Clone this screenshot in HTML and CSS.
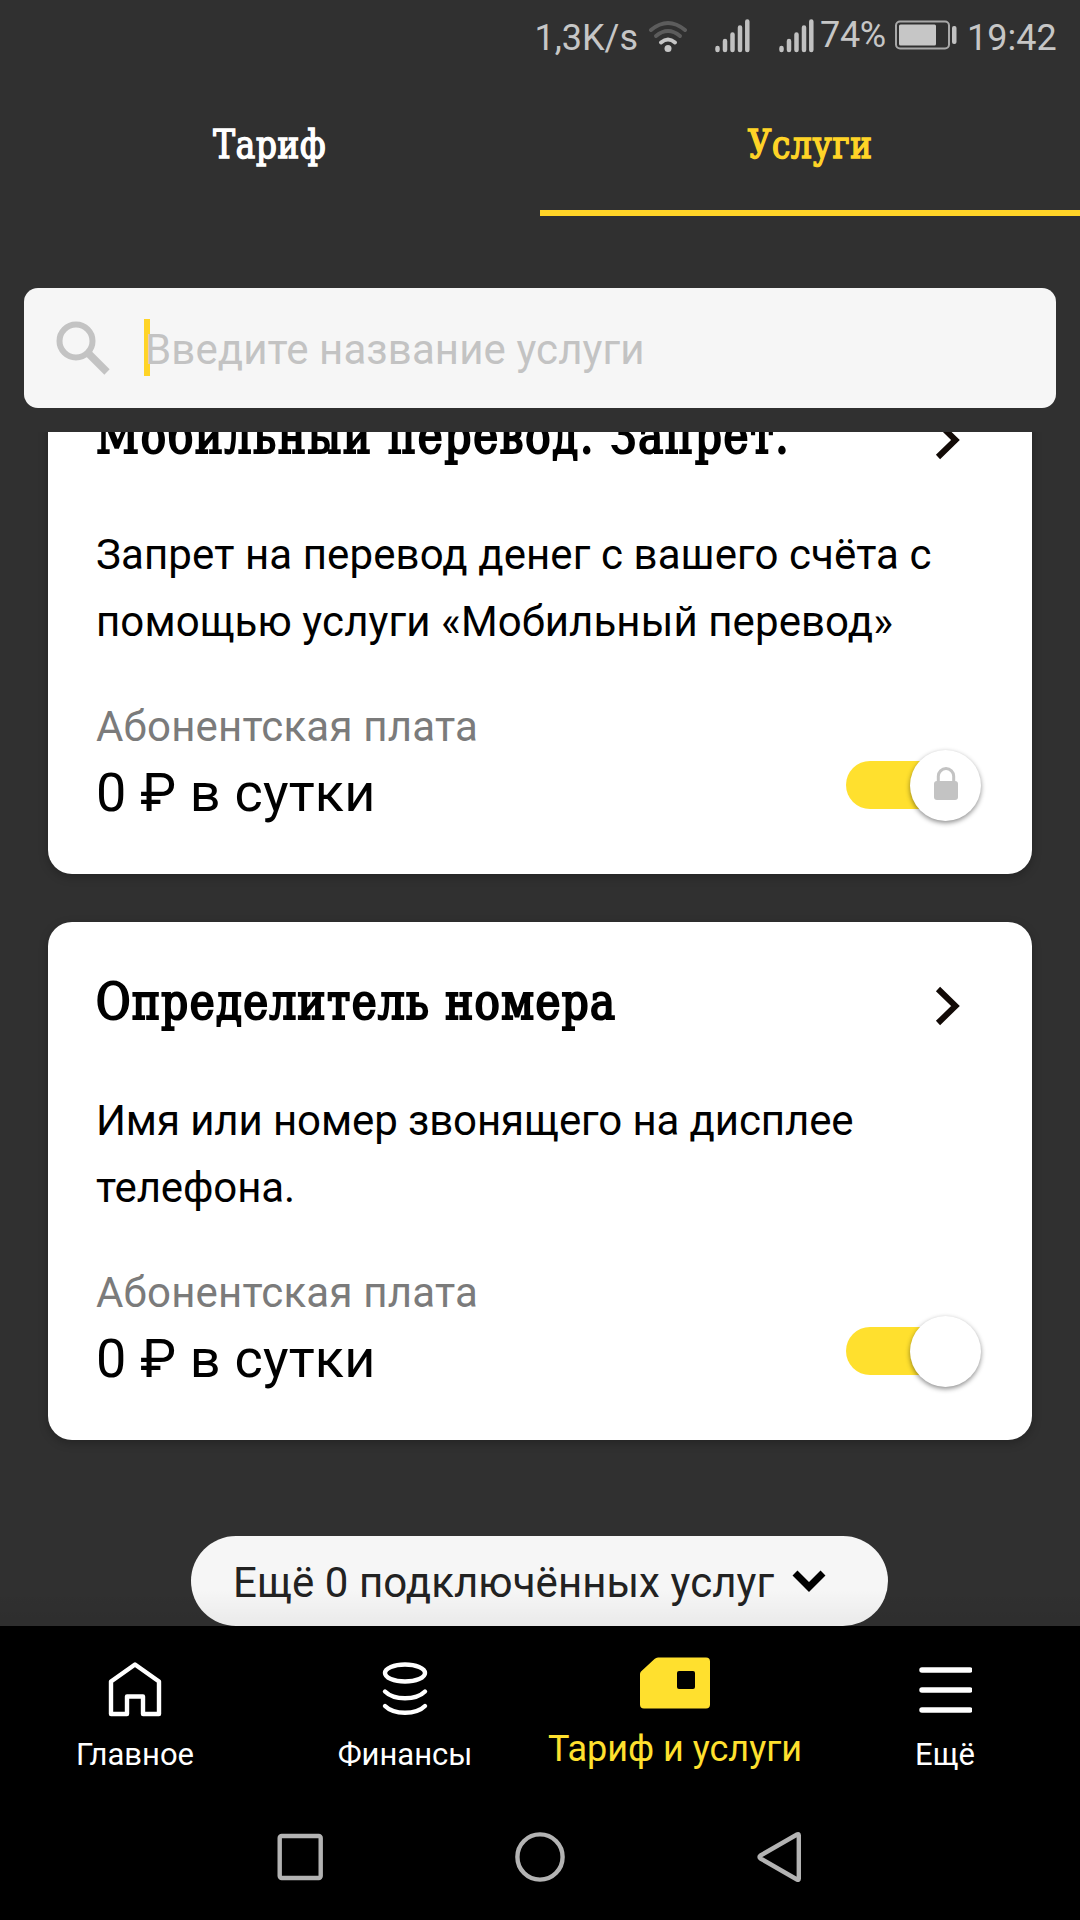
FILE: index.html
```html
<!DOCTYPE html>
<html lang="ru">
<head>
    <meta charset="UTF-8">
    <meta name="viewport" content="width=device-width, initial-scale=1.0">
    <title>Тариф и услуги</title>
    <link rel="stylesheet" href="styles.css">
</head>
<body>
    <div class="app">
        <div class="status-bar">
            <span class="speed">1,3K/s</span>
            <svg class="wifi" width="40" height="34" viewBox="0 0 40 34" fill="none" stroke-width="4" stroke-linecap="round">
                <path d="M3 11Q20 -3 37 11" stroke="#5c5c5c"/>
                <path d="M8 17Q20 7 32 17" stroke="#5c5c5c"/>
                <path d="M13 23.5Q20 17.500 27 23.500" stroke="#c6c6c6"/>
                <circle cx="20" cy="29.500" r="3.500" fill="#c6c6c6"/>
            </svg>
            <svg class="signal" width="35" height="34" viewBox="0 0 35 34" stroke="#c1c1c1" stroke-width="4.500" stroke-linecap="round">
                <path d="M2.500 29v2M10 22v9M17.500 15.500v15.500M25 8.500v22.500M32.300 2.500v28.500"/>
            </svg>
            <svg class="signal second" width="35" height="34" viewBox="0 0 35 34" stroke="#c1c1c1" stroke-width="4.500" stroke-linecap="round">
                <path d="M2.500 29v2M10 22v9M17.500 15.500v15.500M25 8.500v22.500M32.300 2.500v28.500"/>
            </svg>
            <span class="percent">74%</span>
            <svg class="battery" width="62" height="30" viewBox="0 0 62 30">
                <rect x="1" y="1.500" width="53" height="27" rx="4" fill="none" stroke="#a8a8a8" stroke-width="2"/>
                <rect x="4" y="4.500" width="37" height="21" rx="1.500" fill="#c6c6c6"/>
                <rect x="57" y="6" width="4.500" height="18" rx="2" fill="#c1c1c1"/>
            </svg>
            <span class="time">19:42</span>
        </div>

        <div class="tabs">
            <div class="tab"><span class="slab">Тариф</span></div>
            <div class="tab active"><span class="slab">Услуги</span></div>
        </div>

        <div class="search">
            <svg class="search-icon" width="54" height="54" viewBox="0 0 54 54" fill="none" stroke="#c3c3c3">
                <circle cx="20" cy="20" r="16.500" stroke-width="6"/>
                <path d="M33 33L51 51" stroke-width="7.500"/>
            </svg>
            <div class="field"><span class="caret"></span>Введите название услуги</div>
        </div>

        <div class="list">
            <div class="card">
                <div class="card-head">
                    <h2 class="card-title wide">Мобильный перевод. Запрет.</h2>
                    <svg width="26" height="40" viewBox="0 0 26 40" fill="none" stroke="#120a06" stroke-width="6"><path d="M3 3L20.500 20L3 37"/></svg>
                </div>
                <p class="card-text">Запрет на перевод денег с вашего счёта с<br>помощью услуги «Мобильный перевод»</p>
                <div class="card-foot">
                    <div>
                        <div class="fee-label">Абонентская плата</div>
                        <div class="fee">0 ₽ в сутки</div>
                    </div>
                    <div class="toggle">
                        <div class="thumb">
                            <svg width="24" height="33" viewBox="0 0 24 33">
                                <path d="M4.300 16V9.300a7.700 7.700 0 0 1 15.400 0V16" fill="none" stroke="#c3c3c3" stroke-width="3"/>
                                <rect y="14" width="24" height="19" rx="3" fill="#c3c3c3"/>
                            </svg>
                        </div>
                    </div>
                </div>
            </div>

            <div class="card">
                <div class="card-head">
                    <h2 class="card-title">Определитель номера</h2>
                    <svg width="26" height="40" viewBox="0 0 26 40" fill="none" stroke="#120a06" stroke-width="6"><path d="M3 3L20.500 20L3 37"/></svg>
                </div>
                <p class="card-text tight">Имя или номер звонящего на дисплее<br>телефона.</p>
                <div class="card-foot">
                    <div>
                        <div class="fee-label">Абонентская плата</div>
                        <div class="fee">0 ₽ в сутки</div>
                    </div>
                    <div class="toggle">
                        <div class="thumb"></div>
                    </div>
                </div>
            </div>

            <button class="more">
                <span>Ещё 0 подключённых услуг</span>
                <svg width="34" height="22" viewBox="0 0 34 22" fill="none" stroke="#000" stroke-width="7"><path d="M3 3L17 17L31 3"/></svg>
            </button>
        </div>

        <div class="bottom-nav">
            <div class="nav-item">
                <svg width="54" height="56" viewBox="0 0 54 56" fill="none" stroke="#fff" stroke-width="4.400" stroke-linejoin="round">
                    <path d="M3 53V20.500L27 3.500L51 20.500V53H35V35.500H19V53Z"/>
                </svg>
                <span>Главное</span>
            </div>
            <div class="nav-item">
                <svg width="54" height="56" viewBox="0 0 54 56" fill="none" stroke="#fff" stroke-width="4.400" stroke-linecap="round">
                    <ellipse cx="27" cy="12" rx="20" ry="8.500"/>
                    <path d="M7 30.500C16 39.500 38 39.500 47 30.500M7 45C16 54 38 54 47 45"/>
                </svg>
                <span>Финансы</span>
            </div>
            <div class="nav-item active">
                <svg width="70" height="52" viewBox="0 0 70 52">
                    <path d="M18 0.500H66a4 4 0 0 1 4 4V47.500a4 4 0 0 1-4 4H4a4 4 0 0 1-4-4V17Q0 15.500 1 14.500L14.500 2Q16 0.500 18 0.500Z" fill="#ffe02e"/>
                    <rect x="37" y="14" width="18" height="18" rx="2" fill="#000"/>
                </svg>
                <span>Тариф и услуги</span>
            </div>
            <div class="nav-item">
                <svg width="54" height="56" viewBox="0 0 54 56" stroke="#fff" stroke-width="5.500" stroke-linecap="round">
                    <path d="M4 9H52M4 29H52M4 49H52"/>
                </svg>
                <span>Ещё</span>
            </div>
        </div>

        <div class="system-nav">
            <svg width="52" height="52" viewBox="0 0 52 52" fill="none" stroke="#b3b3b3" stroke-width="4.400"><rect x="5.700" y="5" width="41" height="42" rx="2"/></svg>
            <svg width="52" height="52" viewBox="0 0 52 52" fill="none" stroke="#b3b3b3" stroke-width="4.400"><circle cx="26" cy="26" r="22.600"/></svg>
            <svg width="52" height="52" viewBox="0 0 52 52" fill="none" stroke="#b3b3b3" stroke-width="4.400" stroke-linejoin="round"><path d="M44.800 4.500Q44.800 2.500 43 3.500L6.500 24.500Q4.500 26 6.500 27.500L43 48.500Q44.800 49.500 44.800 47.500Z"/></svg>
        </div>
    </div>
</body>
</html>
```

FILE: styles.css
```css
* {
    margin: 0;
    padding: 0;
    box-sizing: border-box;
}

body {
    font-family: Roboto, 'Noto Sans', sans-serif;
    background: #303030;
    width: 1080px;
    height: 1920px;
    overflow: hidden;
}

svg {
    display: block;
    flex-shrink: 0;
}

.app {
    display: flex;
    flex-direction: column;
    height: 1920px;
}

/* status bar */
.status-bar {
    height: 72px;
    padding: 0 24px 0 0;
    display: flex;
    justify-content: flex-end;
    align-items: flex-start;
    color: #c6c6c6;
    font-size: 36px;
    line-height: 42px;
    white-space: nowrap;
}

.speed,
.time {
    padding-top: 17px;
}

.percent {
    padding-top: 14px;
    width: 67px;
    margin: 0 8px 0 6px;
    letter-spacing: -0.3px;
}

.time {
    width: 89px;
    margin-left: 10px;
}

.wifi {
    margin: 19px 27px 0 10px;
}

.signal {
    margin-top: 19px;
}

.signal.second {
    margin-left: 29px;
}

.battery {
    margin-top: 20px;
}

/* tabs */
.tabs {
    display: flex;
    height: 144px;
}

.tab {
    flex: 1;
    padding-top: 49px;
    text-align: center;
    color: #fff;
    border-bottom: 6px solid transparent;
}

.tab.active {
    color: #ffd427;
    border-bottom-color: #ffd427;
}

.slab {
    display: inline-block;
    font-family: 'DejaVu Serif Condensed', 'DejaVu Serif', serif;
    font-stretch: condensed;
    font-weight: normal;
    font-size: 39px;
    line-height: 48px;
    letter-spacing: 0.8px;
    -webkit-text-stroke: 1.5px currentColor;
    transform: scaleX(0.93);
}

/* search */
.search {
    position: relative;
    z-index: 0;
    height: 120px;
    margin: 72px 24px 24px;
    padding-left: 32px;
    display: flex;
    align-items: center;
    background: #f6f6f6;
    border-radius: 14px;
    flex-shrink: 0;
}

.field {
    position: relative;
    margin-left: 35px;
    padding-top: 3px;
    font-size: 42px;
    letter-spacing: 0.1px;
    color: #c3c3c3;
    white-space: nowrap;
}

.caret {
    position: absolute;
    left: -1px;
    top: -3px;
    width: 6px;
    height: 57px;
    background: #ffd427;
    z-index: -1;
}

/* service cards */
.list {
    position: relative;
    height: 1194px;
    overflow: hidden;
    padding: 0 48px;
    display: flex;
    flex-direction: column;
    flex-shrink: 0;
}

.list::after {
    content: '';
    position: absolute;
    left: 0;
    right: 0;
    bottom: 0;
    height: 36px;
    background: linear-gradient(rgba(0, 0, 0, 0), rgba(0, 0, 0, 0.05));
}

.card {
    height: 518px;
    margin-bottom: 48px;
    padding: 50px 48px 0;
    background: #fff;
    border-radius: 24px;
    box-shadow: 0 3px 10px rgba(0, 0, 0, 0.25);
    flex-shrink: 0;
}

.card:first-child {
    margin-top: -76px;
}

.card-head {
    display: flex;
    justify-content: space-between;
    height: 68px;
    padding-right: 23px;
}

.card-head svg {
    margin-top: 14px;
}

.card-title {
    font-family: 'DejaVu Serif Condensed', 'DejaVu Serif', serif;
    font-stretch: condensed;
    font-weight: normal;
    font-size: 50px;
    line-height: 60px;
    letter-spacing: 1.5px;
    color: #000;
    white-space: nowrap;
    -webkit-text-stroke: 2.2px #000;
    transform: scaleX(0.935);
    transform-origin: left;
}

.card-title.wide {
    letter-spacing: 1.9px;
}

.card-text {
    margin-top: 47px;
    font-size: 42px;
    line-height: 67px;
    letter-spacing: 0.1px;
    color: #000;
    white-space: nowrap;
}

.card-text.tight {
    letter-spacing: -0.1px;
}

.card-foot {
    display: flex;
    justify-content: space-between;
    margin-top: 42px;
}

.fee-label {
    font-size: 42px;
    line-height: 60px;
    letter-spacing: 0.2px;
    color: #7b7b7b;
}

.fee {
    font-size: 54px;
    line-height: 72px;
    letter-spacing: 0.2px;
    color: #000;
}

.toggle {
    width: 135px;
    height: 48px;
    margin: 64px 3px 0 0;
    border-radius: 24px;
    background: linear-gradient(90deg, #ffe02e 100px, transparent 100px);
    display: flex;
    justify-content: flex-end;
    align-items: center;
}

.thumb {
    width: 71px;
    height: 71px;
    border-radius: 50%;
    background: #fff;
    box-shadow: 0 2px 5px rgba(0, 0, 0, 0.45);
    display: flex;
    justify-content: center;
    align-items: center;
    flex-shrink: 0;
}

.thumb svg {
    margin-top: -3px;
}

.more {
    width: 697px;
    height: 90px;
    margin: 48px 0 0 143px;
    padding-left: 42px;
    display: flex;
    align-items: center;
    border: none;
    border-radius: 45px;
    background: #f6f6f6;
    font-family: Roboto, sans-serif;
    font-size: 42px;
    color: #222;
    white-space: nowrap;
    flex-shrink: 0;
}

.more span {
    padding-top: 2px;
    letter-spacing: 0.06px;
}

.more svg {
    margin-left: 18px;
}

/* bottom navigation */
.bottom-nav {
    height: 168px;
    display: flex;
    background: #000;
}

.nav-item {
    flex: 1;
    padding-top: 35px;
    display: flex;
    flex-direction: column;
    align-items: center;
    color: #fff;
    font-size: 31px;
    line-height: 36px;
    white-space: nowrap;
}

.nav-item span {
    margin-top: 20px;
}

.nav-item.active {
    padding-top: 31px;
    color: #ffe02e;
    font-size: 36px;
    line-height: 42px;
}

.nav-item.active span {
    margin-top: 19px;
}

.system-nav {
    flex: 1;
    display: flex;
    justify-content: center;
    gap: 188px;
    padding-top: 37px;
    background: #000;
}
```
